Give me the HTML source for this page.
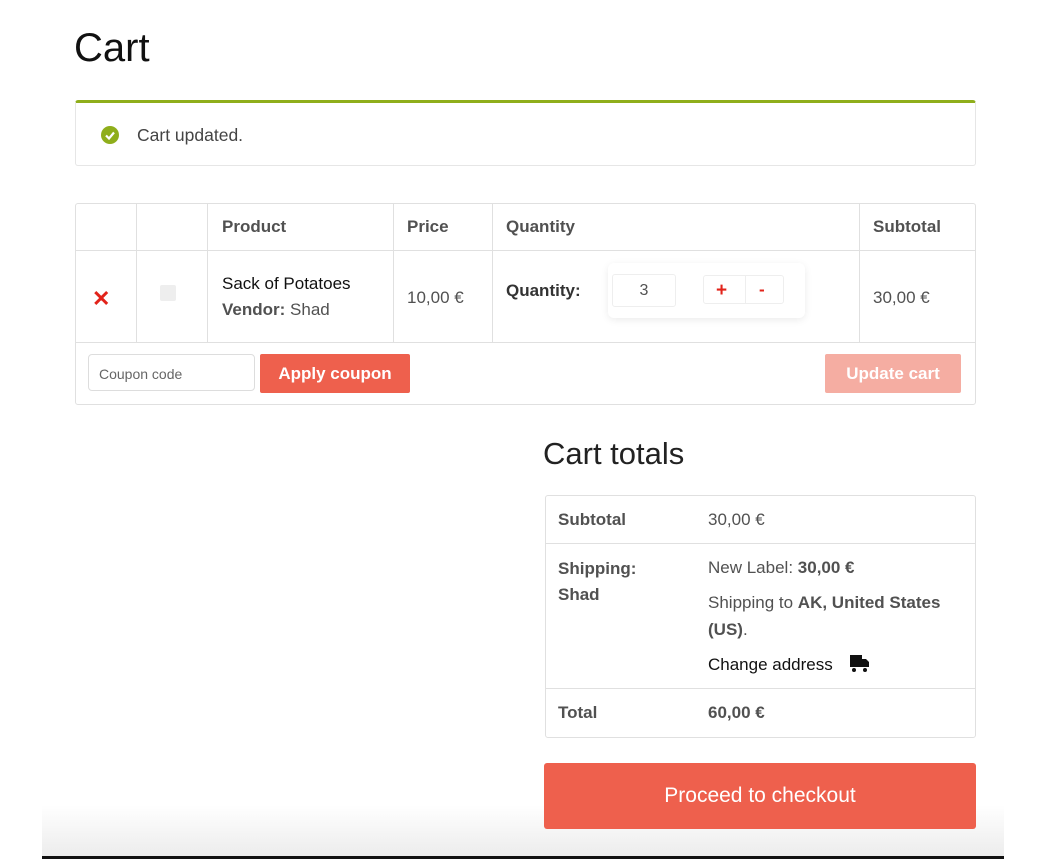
<!DOCTYPE html>
<html><head><style>
*{margin:0;padding:0;box-sizing:border-box}
body{width:1042px;height:862px;background:#fff;font-family:"Liberation Sans",sans-serif;color:#515151;position:relative;overflow:hidden}
.a{position:absolute}
.b{font-weight:bold}
.vl{position:absolute;width:1px;background:#e0e0e0}
.hl{position:absolute;height:1px;background:#e0e0e0}
</style></head><body>
<div class="a" style="left:74px;top:26px;font-size:40px;color:#111">Cart</div>
<div class="a" style="left:75px;top:100px;width:901px;height:66px;border:1px solid #e6e6e6;border-top:3px solid #8fae1b;border-radius:3px"></div>
<div class="a" style="left:101px;top:126px;width:18px;height:18px;border-radius:50%;background:#8fae1b"><svg width="18" height="18"><path d="M5 9.5l3 3 5-6" stroke="#fff" stroke-width="2.2" fill="none"/></svg></div>
<div class="a" style="left:137px;top:125px;font-size:17.5px;color:#444">Cart updated.</div>

<div class="a" style="left:75px;top:203px;width:901px;height:202px;border:1px solid #e0e0e0;border-radius:3px"></div>
<div class="hl" style="left:75px;top:250px;width:901px"></div>
<div class="hl" style="left:75px;top:342px;width:901px"></div>
<div class="vl" style="left:136px;top:203px;height:139px"></div>
<div class="vl" style="left:207px;top:203px;height:139px"></div>
<div class="vl" style="left:393px;top:203px;height:139px"></div>
<div class="vl" style="left:492px;top:203px;height:139px"></div>
<div class="vl" style="left:859px;top:203px;height:139px"></div>
<div class="a b" style="left:222px;top:217px;font-size:17px">Product</div>
<div class="a b" style="left:407px;top:217px;font-size:17px">Price</div>
<div class="a b" style="left:506px;top:217px;font-size:17px">Quantity</div>
<div class="a b" style="left:873px;top:217px;font-size:17px">Subtotal</div>
<div class="a b" style="left:92px;top:286px;font-size:22px;color:#e2231a">✕</div>
<div class="a" style="left:160px;top:285px;width:16px;height:16px;background:#eee;border-radius:2px"></div>
<div class="a" style="left:222px;top:274px;font-size:17px;color:#111">Sack of Potatoes</div>
<div class="a" style="left:222px;top:300px;font-size:17px"><b>Vendor:</b> Shad</div>
<div class="a" style="left:407px;top:288px;font-size:17px">10,00 €</div>
<div class="a b" style="left:506px;top:281px;font-size:17px;color:#333">Quantity:</div>
<div class="a" style="left:608px;top:263px;width:197px;height:55px;border-radius:6px;box-shadow:0 2px 8px rgba(0,0,0,.08)"></div>
<div class="a" style="left:612px;top:274px;width:64px;height:33px;border:1px solid #eee;border-radius:3px;text-align:center;line-height:31px;font-size:16px">3</div>
<div class="a" style="left:703px;top:275px;width:81px;height:29px;border:1px solid #eee;border-radius:3px"></div>
<div class="vl" style="left:745px;top:275px;height:29px;background:#eee"></div>
<div class="a b" style="left:716px;top:280px;font-size:19px;color:#e2231a">+</div>
<div class="a b" style="left:759px;top:280px;font-size:17px;color:#e2231a">-</div>
<div class="a" style="left:873px;top:288px;font-size:17px">30,00 €</div>
<div class="a" style="left:88px;top:354px;width:167px;height:37px;border:1px solid #ddd;border-radius:4px;font-size:14px;color:#666;padding:11px 10px">Coupon code</div>
<div class="a b" style="left:260px;top:354px;width:150px;height:39px;background:#ee604d;border-radius:2px;color:#fff;font-size:17px;text-align:center;line-height:39px">Apply coupon</div>
<div class="a b" style="left:825px;top:354px;width:136px;height:39px;background:#f5ada2;border-radius:2px;color:#fff;font-size:17px;text-align:center;line-height:39px">Update cart</div>

<div class="a" style="left:543px;top:436px;font-size:31px;color:#222">Cart totals</div>
<div class="a" style="left:545px;top:495px;width:431px;height:243px;border:1px solid #e0e0e0;border-radius:3px"></div>
<div class="hl" style="left:545px;top:543px;width:431px"></div>
<div class="hl" style="left:545px;top:688px;width:431px"></div>
<div class="a b" style="left:558px;top:510px;font-size:17px">Subtotal</div>
<div class="a" style="left:708px;top:510px;font-size:17px">30,00 €</div>
<div class="a b" style="left:558px;top:556px;font-size:17px;line-height:26px">Shipping:<br>Shad</div>
<div class="a" style="left:708px;top:558px;font-size:17px">New Label: <b>30,00 €</b></div>
<div class="a" style="left:708px;top:589px;font-size:17px;line-height:27px;width:260px">Shipping to <b>AK, United States (US)</b>.</div>
<div class="a" style="left:708px;top:655px;font-size:17px;color:#111">Change address</div>
<svg class="a" style="left:850px;top:654px" width="19" height="19" viewBox="0 0 19 19"><rect x="0" y="1" width="12" height="12" fill="#111"/><path d="M12 5h4l3 3v5h-7z" fill="#111"/><circle cx="4" cy="16" r="2" fill="#111"/><circle cx="15" cy="16" r="2" fill="#111"/></svg>
<div class="a b" style="left:558px;top:703px;font-size:17px">Total</div>
<div class="a b" style="left:708px;top:703px;font-size:17px">60,00 €</div>

<div class="a" style="left:42px;top:805px;width:962px;height:52px;background:linear-gradient(#fff,#ececec)"></div>
<div class="a" style="left:544px;top:763px;width:432px;height:66px;background:#ee604d;border-radius:3px;color:#fff;font-size:21px;text-align:center;line-height:66px">Proceed to checkout</div>
<div class="a" style="left:42px;top:856px;width:962px;height:3px;background:#111"></div>
</body></html>
